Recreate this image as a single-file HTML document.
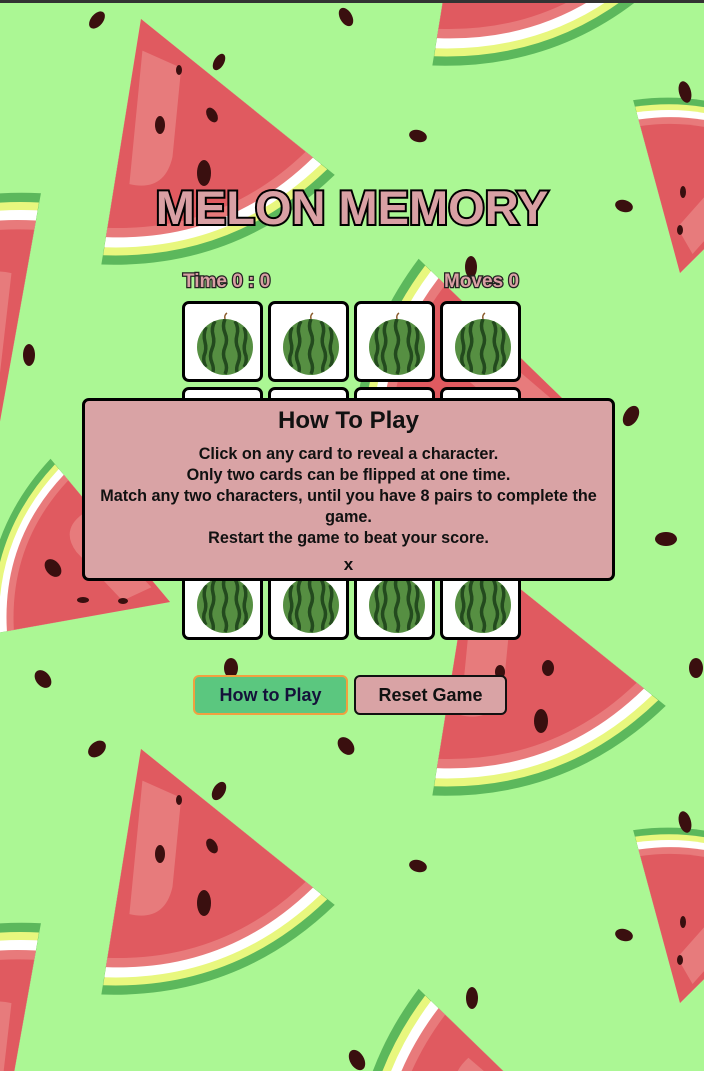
<!DOCTYPE html>
<html style="overflow:hidden"><head><meta charset="utf-8">
<style>
*{margin:0;padding:0;box-sizing:border-box}
html,body{width:704px;height:1071px;overflow:hidden}
body{background:#abf794;position:relative;font-family:"Liberation Sans",sans-serif}
#bg{position:absolute;left:0;top:0}
.topbar{position:absolute;left:0;top:0;width:704px;height:3px;background:#333}
h1{position:absolute;left:0;width:704px;top:184px;line-height:47px;text-align:center;font-size:47px;font-weight:bold;color:#d9a0a4;-webkit-text-stroke:4px #000;paint-order:stroke fill;white-space:nowrap}
.stat{position:absolute;top:271px;font-size:19px;font-weight:bold;color:#d9a0a4;-webkit-text-stroke:2.5px #222;paint-order:stroke fill}
.card{position:absolute;width:81px;height:81px;background:#fff;border:3px solid #000;border-radius:7px}
.card svg{position:absolute;left:9px;top:7px}
.modal{position:absolute;left:82px;top:398px;width:533px;height:183px;background:#d9a3a5;border:3px solid #000;border-radius:7px;text-align:center;color:#111}
.modal h2{font-size:24px;font-weight:bold;margin-top:6px;line-height:28px}
.modal p{font-size:16.2px;font-weight:bold;line-height:21px}
.modal .lines{margin-top:9px}
.modal .x{margin-top:6px;font-size:17px;font-weight:bold;line-height:20px}
.btn{position:absolute;top:675px;height:40px;border-radius:6px;font-size:18px;font-weight:bold;text-align:center;line-height:36px}
</style></head><body>
<svg id="bg" width="704" height="1071" viewBox="0 0 704 1071">
<defs>
<g id="w">
<path d="M0 0 L-125 215 Q0 268 125 215 Z" fill="#5cb85c"/>
<path d="M0 0 L-120 207 Q0 258 120 207 Z" fill="#e8f77e"/>
<path d="M0 0 L-116 200 Q0 249 116 200 Z" fill="#fff"/>
<path d="M0 0 L-111 191 Q0 239 111 191 Z" fill="#e87a7b"/>
<path d="M0 0 L-106 183 Q0 228 106 183 Z" fill="#e05a60"/>
<path d="M-10 30 L-70 150 Q-40 170 -20 140 Q0 100 20 60 Z" fill="#e77b7c"/>
</g>
<clipPath id="cc"><circle cx="28" cy="32" r="28"/></clipPath>
<g id="m">
<circle cx="28" cy="32" r="28" fill="#568f42"/>
<g stroke="#234a1e" stroke-width="3.5" fill="none" clip-path="url(#cc)">
<path d="M28 4 q-3 7 0 14 q3 7 0 14 q-3 7 0 14 q3 7 0 13"/>
<path d="M18 6 q-4 7 -2 14 q2 7 -1 14 q-3 7 0 14 q2 5 1 9"/>
<path d="M38 6 q4 7 2 14 q-2 7 1 14 q3 7 0 14 q-2 5 -1 9"/>
<path d="M9 12 q-3 8 -1 15 q2 7 -1 14 q-1 6 2 11"/>
<path d="M47 12 q3 8 1 15 q-2 7 1 14 q1 6 -2 11"/>
</g>
<path d="M28 4 q-1 -4 2 -6" stroke="#8a5a2a" stroke-width="1.5" fill="none"/>
</g>
</defs>
<use href="#w" transform="translate(141,19) rotate(-21)"/>
<use href="#w" transform="translate(141,749) rotate(-21)"/>
<use href="#w" transform="translate(472,-180) rotate(-21)"/>
<use href="#w" transform="translate(472,550) rotate(-21)"/>
<use href="#w" transform="translate(680,273) rotate(-165) scale(0.72)"/>
<use href="#w" transform="translate(680,1003) rotate(-165) scale(0.72)"/>
<use href="#w" transform="translate(-3,438) rotate(160)"/>
<use href="#w" transform="translate(-3,1168) rotate(160)"/>
<use href="#w" transform="translate(170,602) rotate(110) scale(0.75)"/>
<use href="#w" transform="translate(597,432) rotate(104)"/>
<use href="#w" transform="translate(597,1162) rotate(104)"/>
<g fill="#3a0f0f">
<ellipse cx="97" cy="20" rx="6" ry="10" transform="rotate(40 97 20)"/>
<ellipse cx="346" cy="17" rx="6" ry="10" transform="rotate(-30 346 17)"/>
<ellipse cx="219" cy="62" rx="5" ry="9" transform="rotate(30 219 62)"/>
<ellipse cx="179" cy="70" rx="3" ry="5"/>
<ellipse cx="212" cy="115" rx="5" ry="8" transform="rotate(-30 212 115)"/>
<ellipse cx="160" cy="125" rx="5" ry="9"/>
<ellipse cx="204" cy="173" rx="7" ry="13"/>
<ellipse cx="418" cy="136" rx="9" ry="6" transform="rotate(15 418 136)"/>
<ellipse cx="685" cy="92" rx="6" ry="11" transform="rotate(-15 685 92)"/>
<ellipse cx="624" cy="206" rx="9" ry="6" transform="rotate(15 624 206)"/>
<ellipse cx="683" cy="192" rx="3" ry="6"/>
<ellipse cx="680" cy="230" rx="3" ry="5"/>
<ellipse cx="29" cy="355" rx="6" ry="11"/>
<ellipse cx="471" cy="267" rx="6" ry="11"/>
<ellipse cx="631" cy="416" rx="7" ry="11" transform="rotate(30 631 416)"/>
<ellipse cx="666" cy="539" rx="11" ry="7"/>
<ellipse cx="53" cy="568" rx="7" ry="10" transform="rotate(-40 53 568)"/>
<ellipse cx="83" cy="600" rx="6" ry="3"/>
<ellipse cx="123" cy="601" rx="5" ry="3"/>
<ellipse cx="43" cy="679" rx="7" ry="10" transform="rotate(-40 43 679)"/>
<ellipse cx="231" cy="668" rx="7" ry="10"/>
<ellipse cx="548" cy="668" rx="6" ry="8"/>
<ellipse cx="500" cy="672" rx="5" ry="7"/>
<ellipse cx="541" cy="721" rx="7" ry="12"/>
<ellipse cx="696" cy="668" rx="7" ry="10"/>
<ellipse cx="97" cy="749" rx="7" ry="10" transform="rotate(50 97 749)"/>
<ellipse cx="346" cy="746" rx="7" ry="10" transform="rotate(-40 346 746)"/>
<ellipse cx="219" cy="791" rx="6" ry="10" transform="rotate(30 219 791)"/>
<ellipse cx="179" cy="800" rx="3" ry="5"/>
<ellipse cx="212" cy="846" rx="5" ry="8" transform="rotate(-30 212 846)"/>
<ellipse cx="160" cy="854" rx="5" ry="9"/>
<ellipse cx="204" cy="903" rx="7" ry="13"/>
<ellipse cx="418" cy="866" rx="9" ry="6" transform="rotate(15 418 866)"/>
<ellipse cx="685" cy="822" rx="6" ry="11" transform="rotate(-15 685 822)"/>
<ellipse cx="624" cy="935" rx="9" ry="6" transform="rotate(15 624 935)"/>
<ellipse cx="683" cy="922" rx="3" ry="6"/>
<ellipse cx="680" cy="960" rx="3" ry="5"/>
<ellipse cx="472" cy="998" rx="6" ry="11"/>
<ellipse cx="357" cy="1060" rx="7" ry="11" transform="rotate(-30 357 1060)"/>
</g>
</svg>
<div class="topbar"></div>
<h1>MELON MEMORY</h1>
<div class="stat" style="left:183px">Time 0 : 0</div>
<div class="stat" style="left:444px">Moves 0</div>

<div class="card" style="left:182px;top:301px"><svg width="62" height="66" viewBox="-2 -4 60 66"><use href="#m"/></svg></div>
<div class="card" style="left:268px;top:301px"><svg width="62" height="66" viewBox="-2 -4 60 66"><use href="#m"/></svg></div>
<div class="card" style="left:354px;top:301px"><svg width="62" height="66" viewBox="-2 -4 60 66"><use href="#m"/></svg></div>
<div class="card" style="left:440px;top:301px"><svg width="62" height="66" viewBox="-2 -4 60 66"><use href="#m"/></svg></div>
<div class="card" style="left:182px;top:387px"></div>
<div class="card" style="left:268px;top:387px"></div>
<div class="card" style="left:354px;top:387px"></div>
<div class="card" style="left:440px;top:387px"></div>
<div class="card" style="left:182px;top:559px"><svg width="62" height="66" viewBox="-2 -4 60 66"><use href="#m"/></svg></div>
<div class="card" style="left:268px;top:559px"><svg width="62" height="66" viewBox="-2 -4 60 66"><use href="#m"/></svg></div>
<div class="card" style="left:354px;top:559px"><svg width="62" height="66" viewBox="-2 -4 60 66"><use href="#m"/></svg></div>
<div class="card" style="left:440px;top:559px"><svg width="62" height="66" viewBox="-2 -4 60 66"><use href="#m"/></svg></div>

<div class="modal">
<h2>How To Play</h2>
<div class="lines">
<p>Click on any card to reveal a character.</p>
<p>Only two cards can be flipped at one time.</p>
<p>Match any two characters, until you have 8 pairs to complete the<br>game.</p>
<p>Restart the game to beat your score.</p>
</div>
<div class="x">x</div>
</div>

<div class="btn" style="left:193px;width:155px;background:#5bc77f;border:2px solid #f0a040;color:#14123a">How to Play</div>
<div class="btn" style="left:354px;width:153px;background:#d9a3a5;border:2px solid #111;color:#111">Reset Game</div>
</body></html>
